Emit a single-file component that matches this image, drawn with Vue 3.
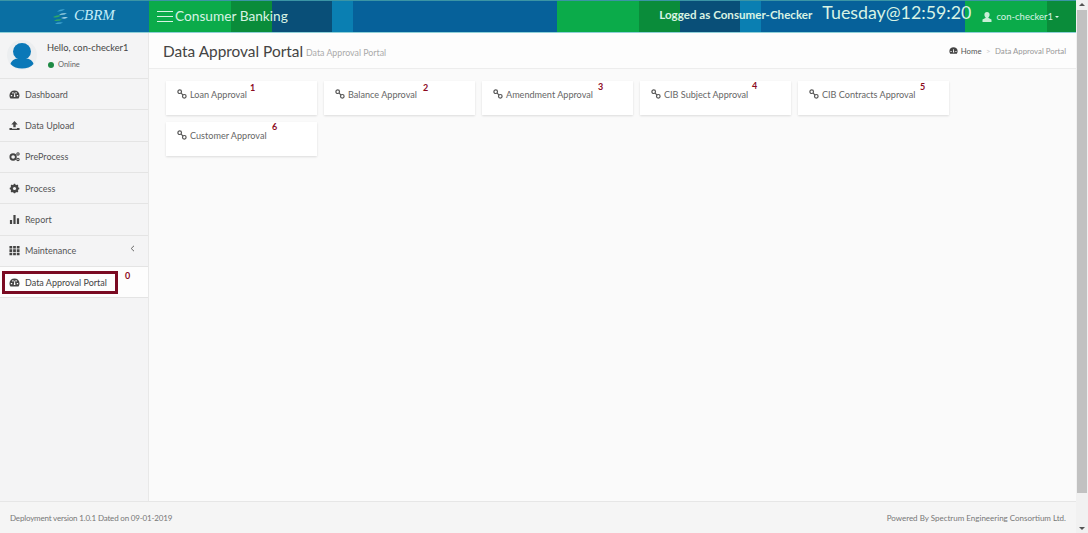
<script setup>
const nav = [
  { label: 'Dashboard', icon: 'gauge' },
  { label: 'Data Upload', icon: 'upload' },
  { label: 'PreProcess', icon: 'cogs' },
  { label: 'Process', icon: 'cog' },
  { label: 'Report', icon: 'bars' },
  { label: 'Maintenance', icon: 'grid', arrow: true },
]
const cards = [
  { label: 'Loan Approval', n: 1, x: 84, y: 2 },
  { label: 'Balance Approval', n: 2, x: 99, y: 2 },
  { label: 'Amendment Approval', n: 3, x: 116, y: 1 },
  { label: 'CIB Subject Approval', n: 4, x: 112, y: 0 },
  { label: 'CIB Contracts Approval', n: 5, x: 122, y: 1 },
  { label: 'Customer Approval', n: 6, x: 106, y: 0 },
]
</script>

<template>
  <div class="page">
    <div class="main">
      <header class="topbar">
        <div class="brand">
          <svg class="leaf" width="17" height="17" viewBox="0 0 17 17">
            <path d="M5 3.500 Q9 .5 13 1.500 Q9 4 5 3.500Z" fill="#3fa3cf" />
            <path d="M7 6.500 Q11 4.500 15 5.500 Q11 7.500 7 6.500Z" fill="#a9d8e6" />
            <path d="M1 9 Q5 6.500 9 7.500 Q5 10.500 1 9Z" fill="#2fa866" />
            <path d="M9 10 Q13 8.500 16 9.500 Q13 11.500 9 10Z" fill="#a9d8e6" />
            <path d="M2 12.500 Q6 10.500 10 11.500 Q6 14 2 12.500Z" fill="#2fa866" />
            <path d="M3 15.500 Q7 13.500 11 14.500 Q7 17 3 15.500Z" fill="#3fa3cf" />
          </svg>
          <span class="brand-text">CBRM</span>
        </div>
        <div class="bar">
          <div class="bar-left">
            <svg class="burger" width="16" height="11" viewBox="0 0 16 11"><path d="M0 .5h16M0 5.500h16M0 10.500h16" stroke="#d8f3e4" stroke-width="1" /></svg>
            <span class="app-name">Consumer Banking</span>
          </div>
          <div class="bar-right">
            <span class="logged">Logged as Consumer-Checker</span>
            <span class="clock">Tuesday@12:59:20</span>
            <svg class="usr" width="10" height="10" viewBox="0 0 10 10"><path d="M5 0a2.600 2.800 0 0 1 2.600 2.800c0 1.400-.8 2.500-1.500 3l3.400 1.800V10H.5V7.600l3.400-1.800c-.7-.5-1.500-1.600-1.500-3A2.600 2.800 0 0 1 5 0Z" fill="#c9eed6" /></svg>
            <span class="usr-name">con-checker1</span>
            <span class="caret"></span>
          </div>
        </div>
      </header>

      <div class="middle">
        <aside class="side">
          <div class="user-panel">
            <svg class="avatar" width="30" height="30" viewBox="0 0 30 30">
              <circle cx="15" cy="15" r="15" fill="#eceef0" />
              <ellipse cx="15" cy="11.500" rx="9" ry="8.500" fill="#0a78b8" />
              <path d="M3.500 24c1-4 5-6 11.500-6s10.500 2 11.500 6c-2.500 3-7 4.500-11.500 4.500S6 27 3.500 24Z" fill="#0a78b8" />
            </svg>
            <div class="user-info">
              <div class="hello">Hello, con-checker1</div>
              <div class="online"><i class="dot"></i>Online</div>
            </div>
          </div>
          <nav class="nav">
            <a v-for="item in nav" :key="item.label" class="nav-item">
              <svg class="nav-ico" width="12" height="12" viewBox="0 0 12 12">
                <g v-if="item.icon === 'gauge'">
                  <path d="M6 1.500A5.500 5.500 0 0 0 .5 7c0 1.300.4 2.400 1.100 3.300h8.800A5.500 5.500 0 0 0 11.500 7 5.500 5.500 0 0 0 6 1.500Z" fill="#444" />
                  <path d="M2 6.500h1.500v1.500H2zM8.500 6.500H10v1.500H8.500zM3.500 3.500H5V5H3.500zM7 3.500h1.500V5H7zM5.200 8.800 5.900 4h.6l.5 4.800Z" fill="#f4f4f5" />
                </g>
                <g v-else-if="item.icon === 'upload'" fill="#444">
                  <path d="M6 1 9.500 4.800H7.300V8H4.700V4.800H2.500Z" /><path d="M.5 8.800h2.800v.8h5.400v-.8h2.800V11H.5Z" />
                </g>
                <g v-else-if="item.icon === 'cogs'" fill="#444">
                  <circle cx="4.500" cy="6.500" r="3" fill="none" stroke="#444" stroke-width="2" />
                  <circle cx="9.800" cy="3.200" r="1.300" fill="none" stroke="#444" stroke-width="1.200" />
                  <circle cx="9.800" cy="9.200" r="1.300" fill="none" stroke="#444" stroke-width="1.200" />
                </g>
                <g v-else-if="item.icon === 'cog'">
                  <circle cx="6" cy="6" r="3.300" fill="none" stroke="#444" stroke-width="2.400" />
                  <path d="M6 .8v10.400M.8 6h10.400M2.300 2.300l7.400 7.400M9.700 2.300l-7.400 7.400" stroke="#444" stroke-width="1.500" />
                  <circle cx="6" cy="6" r="1.700" fill="#f4f4f5" />
                </g>
                <g v-else-if="item.icon === 'bars'" fill="#444">
                  <path d="M1 6.500h2.400V11H1zM4.800 1h2.400v10H4.800zM8.600 4.500H11V11H8.600z" />
                </g>
                <g v-else fill="#444">
                  <path d="M.5 1h3v2.800h-3zM4.500 1h3v2.800h-3zM8.500 1h3v2.800h-3zM.5 4.700h3v2.800h-3zM4.500 4.700h3v2.800h-3zM8.500 4.700h3v2.800h-3zM.5 8.400h3v2.800h-3zM4.500 8.400h3v2.800h-3zM8.500 8.400h3v2.800h-3z" />
                </g>
              </svg>
              <span>{{ item.label }}</span>
              <svg v-if="item.arrow" class="chev" width="5" height="7" viewBox="0 0 5 7"><path d="M4 .8 1.200 3.500 4 6.200" fill="none" stroke="#666" stroke-width="1" /></svg>
            </a>
            <div class="nav-active">
              <a class="active-box">
                <svg class="nav-ico" width="12" height="12" viewBox="0 0 12 12">
                  <path d="M6 1.500A5.500 5.500 0 0 0 .5 7c0 1.300.4 2.400 1.100 3.300h8.800A5.500 5.500 0 0 0 11.500 7 5.500 5.500 0 0 0 6 1.500Z" fill="#444" />
                  <path d="M2 6.500h1.500v1.500H2zM8.500 6.500H10v1.500H8.500zM3.500 3.500H5V5H3.500zM7 3.500h1.500V5H7zM5.200 8.800 5.900 4h.6l.5 4.800Z" fill="#fff" />
                </svg>
                <span>Data Approval Portal</span>
              </a>
              <b class="mark zero">0</b>
            </div>
          </nav>
        </aside>

        <main class="content">
          <div class="title-bar">
            <h1>Data Approval Portal</h1>
            <small>Data Approval Portal</small>
            <div class="crumbs">
              <svg width="9" height="9" viewBox="0 0 12 12">
                <path d="M6 1.500A5.500 5.500 0 0 0 .5 7c0 1.300.4 2.400 1.100 3.300h8.800A5.500 5.500 0 0 0 11.500 7 5.500 5.500 0 0 0 6 1.500Z" fill="#444" />
                <path d="M2 6.500h1.500v1.500H2zM8.500 6.500H10v1.500H8.500zM5.200 8.800 5.900 4h.6l.5 4.800Z" fill="#fdfdfd" />
              </svg>
              <span class="home">Home</span>
              <span class="sep">&gt;</span>
              <span class="here">Data Approval Portal</span>
            </div>
          </div>
          <div class="cards">
            <a v-for="c in cards" :key="c.n" class="card">
              <svg class="link" width="10" height="10" viewBox="0 0 10 10">
                <g fill="none" stroke="#555" stroke-width="1.200">
                  <circle cx="2.700" cy="2.700" r="1.800" />
                  <circle cx="7.300" cy="7.300" r="1.800" />
                  <path d="M3.800 3.800l2.400 2.400" />
                </g>
              </svg>
              <span>{{ c.label }}</span>
              <b class="mark" :style="{ left: c.x + 'px', top: c.y + 'px' }">{{ c.n }}</b>
            </a>
          </div>
        </main>
      </div>

      <footer class="foot">
        <span class="deploy">Deployment version 1.0.1 Dated on 09-01-2019</span>
        <span>Powered By Spectrum Engineering Consortium Ltd.</span>
      </footer>
    </div>

    <div class="scrollbar">
      <span class="arrow up"></span>
      <div class="track"><div class="thumb"></div></div>
      <span class="arrow down"></span>
    </div>
  </div>
</template>

<style>
html, body { margin: 0; background: #f1f1f1; }
</style>

<style scoped>
.page {
  display: flex;
  width: 1088px;
  height: 533px;
  overflow: hidden;
  font-family: Lato, "Noto Sans", sans-serif;
  color: #555;
}
.main { flex: 0 0 1076px; display: flex; flex-direction: column; }
.topbar { flex: 0 0 33px; display: flex; border-top: 1px solid #3b95a5; border-bottom: 1px solid #8fd0d8; box-sizing: border-box; }
.brand {
  flex: 0 0 149px;
  display: flex;
  align-items: center;
  gap: 5px;
  padding-left: 52px;
  box-sizing: border-box;
  background: #0a6fa3;
}
.brand-text {
  font: italic 15px "Liberation Serif", serif;
  color: #c4eef8;
  margin-bottom: 2px;
}
.bar {
  flex: 1;
  display: flex;
  align-items: center;
  justify-content: space-between;
  background-image: linear-gradient(90deg,
    #0bab4a 0, #0bab4a 82px,
    #0a8c3a 82px, #0a8c3a 123px,
    #094f78 123px, #094f78 183px,
    #0a7fb2 183px, #0a7fb2 204px,
    #06619a 204px, #06619a 408px);
  background-size: 408px 100%;
}
.bar-left { display: flex; align-items: center; gap: 2px; padding-left: 8px; margin-bottom: 3px; }
.burger { margin-top: 2px; }
.app-name { color: #d8f3e4; font-size: 13.700px; }
.bar-right { display: flex; align-items: center; padding-right: 17px; color: #d8f3e4; }
.logged { font-size: 11.600px; font-weight: 700; margin-right: 10px; margin-bottom: 4px; }
.clock { font-size: 17.800px; margin-right: 10px; margin-bottom: 9px; line-height: 22px; }
.usr { margin-right: 4px; margin-left: 1px; }
.usr-name { font-size: 9.500px; }
.caret {
  width: 0; height: 0; margin-left: 2px;
  border: 2px solid transparent;
  border-top-color: #d8f3e4;
  border-bottom: 0;
}
.middle { flex: 1; display: flex; min-height: 0; }
.side {
  flex: 0 0 148px;
  background: #f4f4f5;
  border-right: 1px solid #e8e8e8;
}
.user-panel {
  height: 46px;
  box-sizing: border-box;
  display: flex;
  gap: 10px;
  padding: 7px 0 0 7px;
  border-bottom: 1px solid #e4e4e4;
}
.user-info { padding-top: 2px; }
.hello { font-size: 9.300px; color: #444; line-height: 12px; }
.online { font-size: 7.500px; color: #666; line-height: 12px; margin-top: 5px; display: flex; align-items: center; gap: 4px; }
.dot { width: 6px; height: 6px; border-radius: 50%; background: #1e8a44; display: block; margin-left: 1px; }
.nav-item, .nav-active {
  display: flex;
  align-items: center;
  height: 31.330px;
  box-sizing: border-box;
  border-bottom: 1px solid #e4e4e4;
  font-size: 9px;
  color: #555;
}
.nav-item { padding-left: 9px; }
.nav-ico { margin-right: 5px; flex: none; width: 11px; height: 11px; }
.chev { margin-left: auto; margin-right: 13px; margin-top: -4px; }
.nav-active { background: #fdfdfd; position: relative; padding-left: 2px; }
.active-box {
  width: 116px;
  height: 23px;
  box-sizing: border-box;
  border: 3px solid #7a0a22;
  display: flex;
  align-items: center;
  padding-left: 4px;
  color: #444;
}
.mark { position: absolute; color: #8c0a1e; font-size: 9px; line-height: 10px; font-weight: 700; }
.zero { left: 125px; top: 4px; }
.content { flex: 1; background: #fafafa; min-width: 0; }
.title-bar {
  height: 36px;
  box-sizing: border-box;
  display: flex;
  align-items: center;
  padding: 0 10px 0 14px;
  background: #fdfdfd;
  border-bottom: 1px solid #ededed;
}
h1 { margin: 0; font-size: 15.400px; font-weight: 400; color: #444; }
small { font-size: 8.800px; color: #aaa; margin-left: 3px; margin-top: 3px; }
.crumbs { margin-left: auto; display: flex; align-items: center; gap: 3px; font-size: 7.800px; }
.home { color: #555; }
.sep { color: #ccc; margin: 0 1.500px; }
.here { color: #999; }
.cards {
  display: flex;
  flex-wrap: wrap;
  gap: 7px;
  padding: 12px 0 0 17px;
  width: 800px;
}
.card {
  position: relative;
  width: 151px;
  height: 34px;
  box-sizing: border-box;
  background: #fff;
  box-shadow: 0 1px 2px rgba(0,0,0,.12);
  display: flex;
  align-items: flex-start;
  padding: 7px 0 0 11px;
  font-size: 9.100px;
  line-height: 13px;
  color: #666;
}
.link { margin: 1px 3px 0 0; flex: none; }
.foot {
  flex: 0 0 32px;
  display: flex;
  align-items: center;
  justify-content: space-between;
  padding: 0 10px;
  background: #f5f5f5;
  border-top: 1px solid #e6e6e6;
  box-sizing: border-box;
  font-size: 8px;
  color: #777;
}
.deploy { letter-spacing: -.18px; }
.scrollbar {
  flex: 0 0 12px;
  display: flex;
  flex-direction: column;
  align-items: center;
  background: #f1f1f1;
}
.track { flex: 1; width: 100%; }
.thumb { height: 483px; margin: 1px 0 0 1px; width: 10px; background: #c1c1c1; }
.arrow { width: 0; height: 0; border: 3px solid transparent; margin: 3px 0; }
.up { border-bottom-color: #555; border-top: 0; }
.down { border-top-color: #555; border-bottom: 0; }
</style>
